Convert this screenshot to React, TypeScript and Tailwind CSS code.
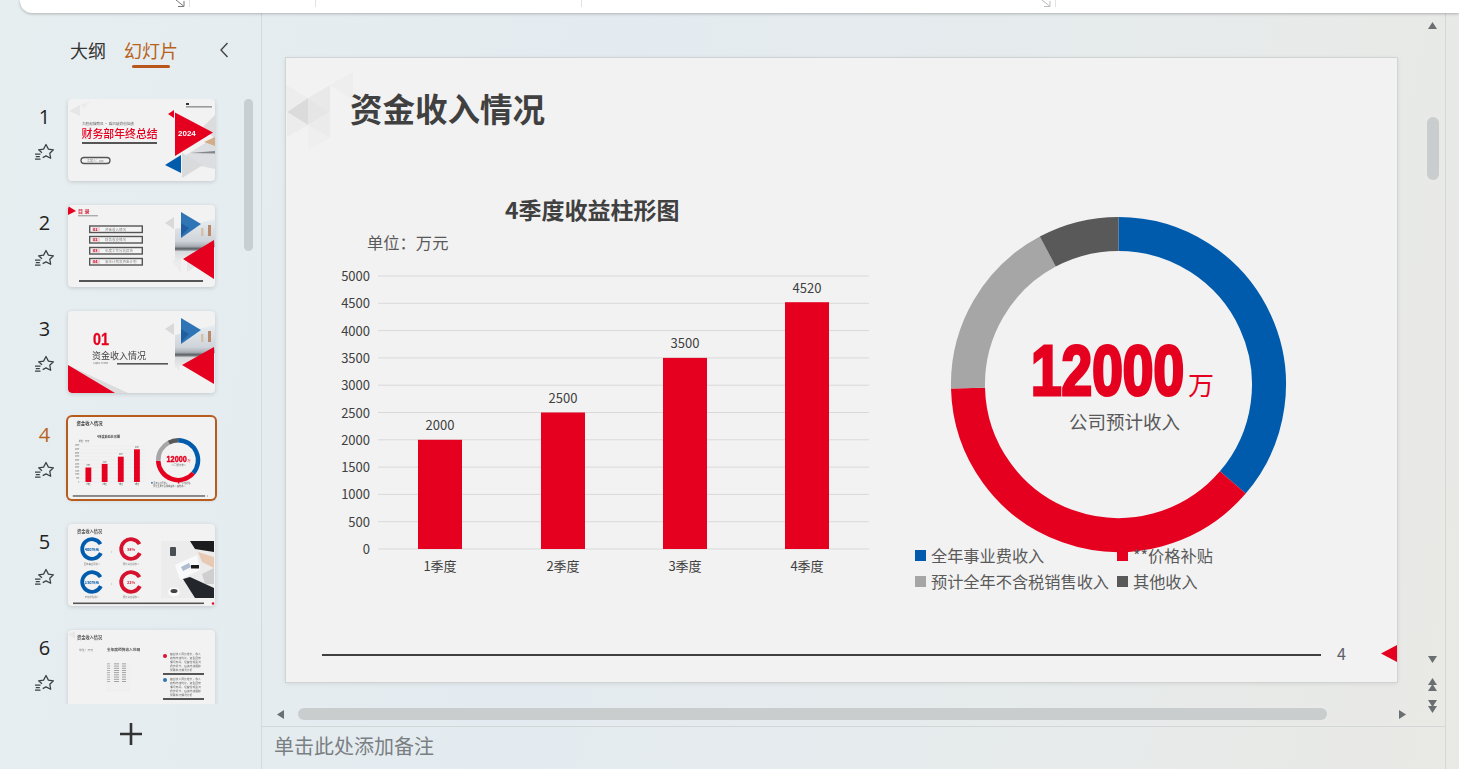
import type { ReactNode } from 'react'

const bars = [
  { label: '1季度', value: 2000, x: 418 },
  { label: '2季度', value: 2500, x: 541 },
  { label: '3季度', value: 3500, x: 663 },
  { label: '4季度', value: 4520, x: 785 },
]
const ticks = [5000, 4500, 4000, 3500, 3000, 2500, 2000, 1500, 1000, 500, 0]
const legend = [
  { label: '全年事业费收入', color: 'bg-[#005bac]' },
  { label: '**价格补贴', color: 'bg-[#e60020]' },
  { label: '预计全年不含税销售收入', color: 'bg-[#a6a6a6]' },
  { label: '其他收入', color: 'bg-[#595959]' },
]

function arc(a0: number, a1: number, r = 150.5, cx = 1118.5, cy = 384.5) {
  const pt = (a: number) => {
    const t = (a * Math.PI) / 180
    return `${(cx + r * Math.sin(t)).toFixed(1)} ${(cy - r * Math.cos(t)).toFixed(1)}`
  }
  return `M${pt(a0)} A${r} ${r} 0 ${a1 - a0 > 180 ? 1 : 0} 1 ${pt(a1)}`
}

function BarChart() {
  const y = (v: number) => 549 - v * 0.0546
  return (
    <g>
      {ticks.map(t => (
        <g key={t}>
          <line x1={378} x2={869} y1={y(t)} y2={y(t)} stroke="#d9d9d9" strokeWidth={1} />
          <text x={370} y={y(t) + 5} textAnchor="end" fontSize={13} fill="#404040">{t}</text>
        </g>
      ))}
      {bars.map(b => (
        <g key={b.label}>
          <rect x={b.x} y={y(b.value)} width={44} height={b.value * 0.0546} fill="#e60020" />
          <text x={b.x + 22} y={y(b.value) - 9.5} textAnchor="middle" fontSize={13} fill="#404040">{b.value}</text>
          <text x={b.x + 22} y={571} textAnchor="middle" fontSize={13} fill="#404040">{b.label}</text>
        </g>
      ))}
    </g>
  )
}

function Donut() {
  return (
    <g>
      <g fill="none" strokeWidth={34}>
        <path d={arc(0, 130.6)} stroke="#005bac" />
        <path d={arc(130.6, 268.6)} stroke="#e60020" />
        <path d={arc(268.6, 332)} stroke="#a6a6a6" />
        <path d={arc(332, 360)} stroke="#595959" />
      </g>
      <text x={1031} y={395} fontFamily="'Liberation Sans', sans-serif" fontWeight={700} fontSize={70} fill="#e60020" stroke="#e60020" strokeWidth={3.2} textLength={153} lengthAdjust="spacingAndGlyphs">12000</text>
      <text x={1188} y={395} fontSize={26} fill="#e60020">万</text>
      <text x={1124.5} y={429} textAnchor="middle" fontSize={18.5} fill="#595959">公司预计收入</text>
    </g>
  )
}

function Decor() {
  return (
    <g>
      <polygon points="286,85 308,98 286,112" fill="#ededed" />
      <polygon points="287,112 308,98 308,125" fill="#dbdbdb" />
      <polygon points="308,98 330,112 308,125" fill="#e6e6e6" />
      <polygon points="308,98 330,85 330,112" fill="#e9e9e9" />
      <polygon points="330,85 353,72 353,100" fill="#eeeeee" />
      <polygon points="287,112 308,125 287,137" fill="#ececec" />
      <polygon points="308,125 330,112 330,138" fill="#ebebeb" />
      <polygon points="308,125 330,138 308,150" fill="#efefef" />
    </g>
  )
}

function Thumb({ selected, children }: { selected?: boolean; children: ReactNode }) {
  return (
    <div className={`w-[147px] h-[82px] overflow-hidden rounded-[4px] bg-[#f2f2f2] shadow-[0_1px_4px_rgba(0,0,0,0.16)] ${selected ? 'ring-2 ring-[#b85c1e] overflow-visible' : ''}`}>
      <svg viewBox="0 0 147 82" className="block w-[147px] h-[82px] rounded-[4px] blur-[0.3px]">{children}</svg>
    </div>
  )
}

function PhotoBits({ id, red }: { id: string; red: string }) {
  return (
    <g>
      <defs>
        <linearGradient id={id} x1="0" y1="0" x2="0" y2="1">
          <stop offset="0" stopColor="#e8edf2" />
          <stop offset="0.5" stopColor="#cfd4da" />
          <stop offset="0.62" stopColor="#a9aeb4" />
          <stop offset="0.68" stopColor="#565b60" />
          <stop offset="0.74" stopColor="#d8dadd" />
          <stop offset="1" stopColor="#eeeeee" />
        </linearGradient>
      </defs>
      <polygon points="97,18 106,12 106,24" fill="#d9d9d9" />
      <polygon points="107,24 147,14 147,42 118,52 107,58" fill={`url(#${id})`} />
      <rect x="140" y="20" width="3" height="11" fill="#b98a6c" />
      <rect x="133" y="23" width="2.5" height="8" fill="#d8bfa8" />
      <polygon points="113,7 133,19 113,33" fill="#2f75b5" />
      <polygon points="113,18 121,23 113,31" fill="#1f5f9f" />
      <polygon points={red} fill="#e60020" />
    </g>
  )
}

function Thumb1() {
  return (
    <Thumb>
      <polygon points="1,12 12,6 12,17" fill="#e6e6e6" />
      <polygon points="12,6 22,2 16,10" fill="#ececec" />
      <rect x="118" y="4" width="3" height="2" fill="#333" />
      <rect x="118" y="7.5" width="26" height="0.8" fill="#444" />
      <text x="14" y="26" fontSize="3.6" fill="#666">大胆起锚劈风 · 乘风破浪创佳绩</text>
      <text x="13.5" y="38.5" fontSize="10.9" fill="#e60020" fontWeight={500}>财务部年终总结</text>
      <rect x="14" y="43" width="75" height="2" fill="#555" />
      <rect x="13" y="58.5" width="29" height="6" rx="3" fill="none" stroke="#555" strokeWidth="1.3" />
      <text x="19" y="63" fontSize="3" fill="#777">汇报人：xxx</text>
      <polygon points="135,28 147,16 147,40" fill="#dcdcdc" />
      <polygon points="118,56 147,38 147,70 128,66" fill="#dcdee1" />
      <polygon points="136,43 147,38 147,47" fill="#d3ad8a" />
      <polygon points="122,54 147,52 147,54.5" fill="#83878c" />
      <polygon points="100,15 106,11 106,19" fill="#e60020" />
      <polygon points="107,13.5 145,33.5 107,57" fill="#e60020" />
      <text x="110" y="37" fontSize="8" fontWeight={700} fill="#fff" fontFamily="'Liberation Sans', sans-serif">2024</text>
      <polygon points="114,54 135,66 114,79" fill="#d9dadb" />
      <polygon points="97,66 113,56 113,74" fill="#005bac" />
    </Thumb>
  )
}

function Thumb2() {
  const rows = [
    { n: '01', t: '资金收入情况', y: 21 },
    { n: '02', t: '财务收支情况', y: 31.5 },
    { n: '03', t: '年度工作分析报告', y: 42.5 },
    { n: '04', t: '来年计划及资金计划', y: 53.5 },
  ]
  return (
    <Thumb>
      <polygon points="0,1 8,6 0,10" fill="#e60020" />
      <text x="10" y="8" fontSize="5" fontWeight={700} fill="#d9203a" letterSpacing="1.4">目录</text>
      <rect x="10" y="10.5" width="20" height="0.7" fill="#666" />
      {rows.map(r => (
        <g key={r.n}>
          <rect x="21.7" y={r.y} width="52.6" height="6.5" fill="#f4f4f4" stroke="#555" strokeWidth="1.4" />
          <rect x="24" y={r.y + 1.2} width="8" height="4.2" fill="#e8d5d8" />
          <text x="25" y={r.y + 4.8} fontSize="3.8" fontWeight={700} fill="#e60020">{r.n}</text>
          <text x="37" y={r.y + 4.7} fontSize="3.5" fill="#888">{r.t}</text>
        </g>
      ))}
      <polygon points="104,56 113,50 113,68" fill="#ececec" />
      <polygon points="119,56 128,61 119,67" fill="#e6e6e6" />
      <PhotoBits id="photo-a" red="115,54 146,35 146,74" />
      <rect x="11" y="75" width="124" height="2" fill="#555" />
    </Thumb>
  )
}

function Thumb3() {
  return (
    <Thumb>
      <polygon points="0,54 60,82 0,82" fill="#dcdcdc" />
      <polygon points="0,54 47,82 0,82" fill="#e60020" />
      <text x="25" y="34" fontSize="16" fontWeight={700} fill="#e60020" stroke="#e60020" strokeWidth="0.3" fontFamily="'Liberation Sans', sans-serif" textLength="16" lengthAdjust="spacingAndGlyphs">01</text>
      <text x="24" y="48" fontSize="9" fill="#444">资金收入情况</text>
      <text x="25" y="52.8" fontSize="2.2" fill="#777">Capital income</text>
      <rect x="49" y="52" width="51" height="1.6" fill="#555" />
      <polygon points="106,50 111,47 111,60" fill="#e2e2e2" />
      <PhotoBits id="photo-b" red="114,54 146,36 146,73" />
    </Thumb>
  )
}

function Thumb4() {
  return (
    <Thumb selected>
      <g transform="scale(0.1323) translate(-286 -58)">
        <BarChart />
        <Donut />
        <text x="350" y="122" fontSize="33" fontWeight={700} fill="#404040">资金收入情况</text>
        <text x="505" y="218" fontSize="23" fontWeight={700} fill="#404040">4季度收益柱形图</text>
        <text x="367" y="248" fontSize="16" fill="#595959">单位：万元</text>
        <rect x="915" y="550" width="11" height="11" fill="#005bac" />
        <rect x="1117" y="550" width="11" height="11" fill="#e60020" />
        <text x="931" y="561" fontSize="16" fill="#595959">全年事业费收入</text>
        <text x="1133" y="561" fontSize="16" fill="#595959">**价格补贴</text>
        <text x="931" y="587" fontSize="16" fill="#595959">预计全年不含税销售收入 其他收入</text>
        <rect x="322" y="650" width="1000" height="10" fill="#555" />
        <text x="1335" y="660" fontSize="14" fill="#555">4</text>
      </g>
    </Thumb>
  )
}

function CRing({ cx, cy, color, label, caption }: { cx: number; cy: number; color: string; label: string; caption: string }) {
  const r = 9.8
  const p = (a: number) => `${(cx + r * Math.sin((a * Math.PI) / 180)).toFixed(2)} ${(cy - r * Math.cos((a * Math.PI) / 180)).toFixed(2)}`
  return (
    <g>
      <path d={`M${p(60)} A${r} ${r} 0 1 0 ${p(115)}`} fill="none" stroke={color} strokeWidth="3.8" />
      <text x={cx} y={cy + 1.5} textAnchor="middle" fontSize="3.8" fontWeight={700} fill={color}>{label}</text>
      <text x={cx} y={cy + 16} textAnchor="middle" fontSize="2.4" fill="#777">{caption}</text>
    </g>
  )
}

function Thumb5() {
  return (
    <Thumb>
      <text x="9" y="8.5" fontSize="4.2" fontWeight={700} fill="#555">资金收入情况</text>
      <CRing cx={24} cy={25} color="#005bac" label="400万元" caption="全年事业费收入" />
      <CRing cx={63} cy={25} color="#d6112e" label="38%" caption="预计占比总收入" />
      <CRing cx={24} cy={58} color="#005bac" label="130万元" caption="价格补贴收入" />
      <CRing cx={63} cy={58} color="#d6112e" label="22%" caption="预计占比总收入" />
      <text x="43" y="29" fontSize="4" fill="#888">›</text>
      <text x="43" y="61" fontSize="4" fill="#888">›</text>
      <rect x="93" y="17" width="53" height="57" fill="#ececec" />
      <polygon points="122,17 146,17 146,28 127,25" fill="#1c1c1e" />
      <rect x="102" y="23" width="6" height="9" rx="1" fill="#4a4f52" />
      <polygon points="107,41 129,31 132,46 112,56" fill="#f9fafb" />
      <polygon points="113,43 121,39 123,43 115,47" fill="#aebbd0" />
      <polygon points="130,28 146,33 146,44 134,38" fill="#e8c9b4" />
      <rect x="123" y="41" width="8" height="3.5" fill="#1c1c1c" />
      <polygon points="134,50 146,44 146,60 137,60" fill="#cfcfcf" />
      <polygon points="115,55 122,53 146,64 146,74 127,74" fill="#23262b" />
      <ellipse cx="106" cy="68" rx="6" ry="4.5" fill="#fafafa" />
      <ellipse cx="106" cy="67" rx="3.5" ry="2" fill="#444" />
      <rect x="5" y="78.5" width="131" height="1.6" fill="#555" />
      <circle cx="145" cy="79.5" r="1.2" fill="#e60020" />
    </Thumb>
  )
}

function Thumb6() {
  const para = ['营业收入同比增长，收入', '结构持续优化，资金回笼', '情况良好，经营性现金流', '稳步提升，后续持续跟踪', '预算执行情况分析']
  return (
    <Thumb>
      <polygon points="0,4 7,1 7,9" fill="#e8e8e8" />
      <text x="9" y="8.5" fontSize="4.2" fontWeight={700} fill="#555">资金收入情况</text>
      <text x="11" y="21" fontSize="2.8" fill="#777">单位：万元</text>
      <text x="39" y="20.5" fontSize="3.7" fontWeight={700} fill="#555">全年度预算收入说明</text>
      {Array.from({ length: 13 }).map((_, i) => (
        <g key={i}>
          <line x1="38" x2="62" y1={34 + i * 2.2} y2={34 + i * 2.2} stroke="#e4e4e4" strokeWidth="0.3" />
          {i < 9 && <rect x="39" y={33.4 + i * 2.2} width="3" height="0.9" fill="#aaa" />}
          {i < 9 && <rect x="46" y={33.4 + i * 2.2} width="5" height="0.9" fill="#999" />}
          {i < 9 && <rect x="54" y={33.4 + i * 2.2} width="4" height="0.9" fill="#999" />}
        </g>
      ))}
      <circle cx="97" cy="26" r="2" fill="#d6112e" />
      <circle cx="97" cy="50" r="2" fill="#2f75b5" />
      {para.map((t, i) => <text key={i} x="102" y={25 + i * 4} fontSize="2.8" fill="#666">{t}</text>)}
      {para.map((t, i) => <text key={i} x="102" y={49.5 + i * 4} fontSize="2.8" fill="#666">{t}</text>)}
      <rect x="95" y="43" width="41" height="2" fill="#555" />
      <rect x="95" y="68" width="41" height="2" fill="#555" />
    </Thumb>
  )
}

function StarIcon() {
  return (
    <svg viewBox="0 0 20 18" className="w-5 h-[18px] text-[#3a3f42]" fill="none" stroke="currentColor" strokeWidth="1.25" strokeLinejoin="round">
      <path d="M8 9.8 4.6 6.8l5-.7 2.4-4.6 2.4 4.6 5 .7-3.6 3.5.9 5-4.7-2.4-3.3 1.7" />
      <path d="M1 11h5.5M1.8 13.6h4M1 16h5.5" />
    </svg>
  )
}

const thumbs = [Thumb1, Thumb2, Thumb3, Thumb4, Thumb5, Thumb6]

function Sidebar() {
  return (
    <aside className="w-[262px] shrink-0 h-full flex flex-col border-r border-[#d5dadc]">
      <div className="h-[99px] shrink-0 pt-[37px] pl-[70px] flex items-start text-[18px] leading-[26px]">
        <span className="text-[#333]">大纲</span>
        <div className="ml-[18px] flex flex-col items-center">
          <span className="text-[#b8621b]">幻灯片</span>
          <div className="mt-[2px] w-[38px] h-[3px] rounded-full bg-[#b8561b]" />
        </div>
        <svg viewBox="0 0 12 18" className="ml-[40px] mt-[4px] w-3 h-[18px] text-[#444]" fill="none" stroke="currentColor" strokeWidth="1.4"><path d="M9.5 2 3 9l6.5 7" /></svg>
      </div>
      <div className="relative h-[605px] shrink-0">
        <div className="h-full overflow-hidden flex flex-col gap-[24px]">
          {thumbs.map((T, i) => (
            <div key={i} className={`flex shrink-0 ${i === 3 ? 'mb-px' : ''}`}>
              <div className="w-[47px] ml-[21px] h-[82px] flex flex-col items-center">
                <span className={`mt-[4px] h-[28px] text-[20px] leading-[28px] font-['Open_Sans',sans-serif] ${i === 3 ? 'text-[#b8621b]' : 'text-[#222]'}`}>{i + 1}</span>
                <div className="mt-[12px] -ml-[2px]"><StarIcon /></div>
              </div>
              <T />
            </div>
          ))}
        </div>
        <div className="absolute left-[244px] top-0 w-[9px] h-[152px] rounded-full bg-[#c8cfd1]" />
      </div>
      <div className="flex-1 flex items-center justify-center pb-[5px]">
        <svg viewBox="0 0 22 22" className="w-[22px] h-[22px] text-[#333]" fill="none" stroke="currentColor" strokeWidth="2.6"><path d="M11 0v22M0 11h22" /></svg>
      </div>
    </aside>
  )
}

function Slide() {
  return (
    <div className="relative w-[1111px] h-[624px] bg-[#f2f2f2] shadow-[0_0_0_1px_#d2d4d4,0_1px_5px_rgba(0,0,0,0.12)] text-[#404040]">
      <svg viewBox="286 58 1111 624" className="absolute inset-0 w-full h-full">
        <Decor />
        <BarChart />
        <Donut />
        <polygon points="1381,653.5 1397,645 1397,662" fill="#e60020" />
      </svg>
      <h1 className="absolute left-[64px] top-[26px] text-[32.5px] leading-[48px] font-bold whitespace-nowrap">资金收入情况</h1>
      <h2 className="absolute left-[219px] top-[134px] text-[23px] leading-[34px] font-bold whitespace-nowrap">4季度收益柱形图</h2>
      <span className="absolute left-[81px] top-[172px] text-[16.3px] leading-[24px] text-[#595959]">单位：万元</span>
      <div className="absolute left-[629px] top-[485px] grid grid-cols-[202px_auto] gap-y-[2px] text-[16.2px] leading-[24px] text-[#595959] whitespace-nowrap">
        {legend.map(l => (
          <div key={l.label} className="flex items-center gap-[5px]">
            <span className={`w-[11px] h-[11px] ${l.color}`} />
            <span>{l.label}</span>
          </div>
        ))}
      </div>
      <div className="absolute left-[36px] top-[596px] w-[999px] h-[2px] bg-[#404040]" />
      <span className="absolute left-[1051px] top-[584px] text-[16px] leading-[22px] text-[#5a6068]">4</span>
    </div>
  )
}

function Tri({ dir, className = '' }: { dir: 'up' | 'down' | 'left' | 'right'; className?: string }) {
  const pts = { up: '0,7 4.5,0 9,7', down: '0,0 9,0 4.5,7', left: '7,0 7,9 0,4.5', right: '0,0 0,9 7,4.5' }[dir]
  const vertical = dir === 'up' || dir === 'down'
  return (
    <svg viewBox={vertical ? '0 0 9 7' : '0 0 7 9'} className={`${vertical ? 'w-[9px] h-[7px]' : 'w-[7px] h-[9px]'} text-[#6b6f71] ${className}`} fill="currentColor"><polygon points={pts} /></svg>
  )
}

function VScroll() {
  return (
    <div className="w-[26px] shrink-0 flex flex-col items-center pl-[1px]">
      <Tri dir="up" className="mt-[22px]" />
      <div className="mt-[88px] w-[12px] h-[63px] rounded-[6px] bg-[#c9cdce]" />
      <div className="flex-1" />
      <Tri dir="down" className="mb-[15px]" />
      <div className="flex flex-col items-center -space-y-[1px] mb-[9px]">
        <Tri dir="up" /><Tri dir="up" />
      </div>
      <div className="flex flex-col items-center -space-y-[1px] mb-[13px]">
        <Tri dir="down" /><Tri dir="down" />
      </div>
    </div>
  )
}

function Launcher({ className = '' }: { className?: string }) {
  return (
    <svg viewBox="0 0 9 7" className={`w-[9px] h-[7px] ${className}`} fill="none" stroke="currentColor" strokeWidth="1"><path d="M0 0l7.5 6M8 1v5.5H2" /></svg>
  )
}

function Ribbon() {
  return (
    <div className="absolute left-[20px] right-0 top-0 h-[13px] bg-white rounded-bl-[12px] shadow-[0_1px_3px_rgba(0,0,0,0.25)] flex items-start text-[#e2e2e2]">
      <Launcher className="ml-[156px] text-[#777]" />
      <div className="ml-[4px] w-px h-[7px] bg-current" />
      <div className="ml-[125px] w-px h-[7px] bg-current" />
      <div className="ml-[265px] w-px h-[7px] bg-current" />
      <Launcher className="ml-[460px] text-[#bbb]" />
      <div className="ml-[4px] w-px h-[7px] bg-current" />
    </div>
  )
}

export default function App() {
  return (
    <div className="relative w-[1459px] h-[769px] overflow-hidden flex font-['Noto_Sans_CJK_SC','Liberation_Sans',sans-serif] bg-[linear-gradient(100deg,#e7eef0_0%,#e4ebf0_40%,#e6ebec_70%,#e9e9e5_100%)]">
      <Sidebar />
      <main className="w-[1184px] shrink-0 h-full flex flex-col border-r border-[#d5d8d8]">
        <div className="h-[727px] shrink-0 flex border-b border-[#d3d7d8]">
          <div className="flex-1 flex flex-col min-w-0">
            <div className="flex-1 pl-[24px] pt-[58px]">
              <Slide />
            </div>
            <div className="h-[12px] mb-[6px] flex items-center pl-[15px]">
              <Tri dir="left" />
              <div className="ml-[14px] w-[1029px] h-[12px] rounded-[6px] bg-[#c9cdce]" />
              <Tri dir="right" className="ml-[72px]" />
            </div>
          </div>
          <VScroll />
        </div>
        <div className="flex-1 pl-[12px] pt-[5px] text-[20px] leading-[28px] text-[#7a7f82]">单击此处添加备注</div>
      </main>
      <Ribbon />
    </div>
  )
}
